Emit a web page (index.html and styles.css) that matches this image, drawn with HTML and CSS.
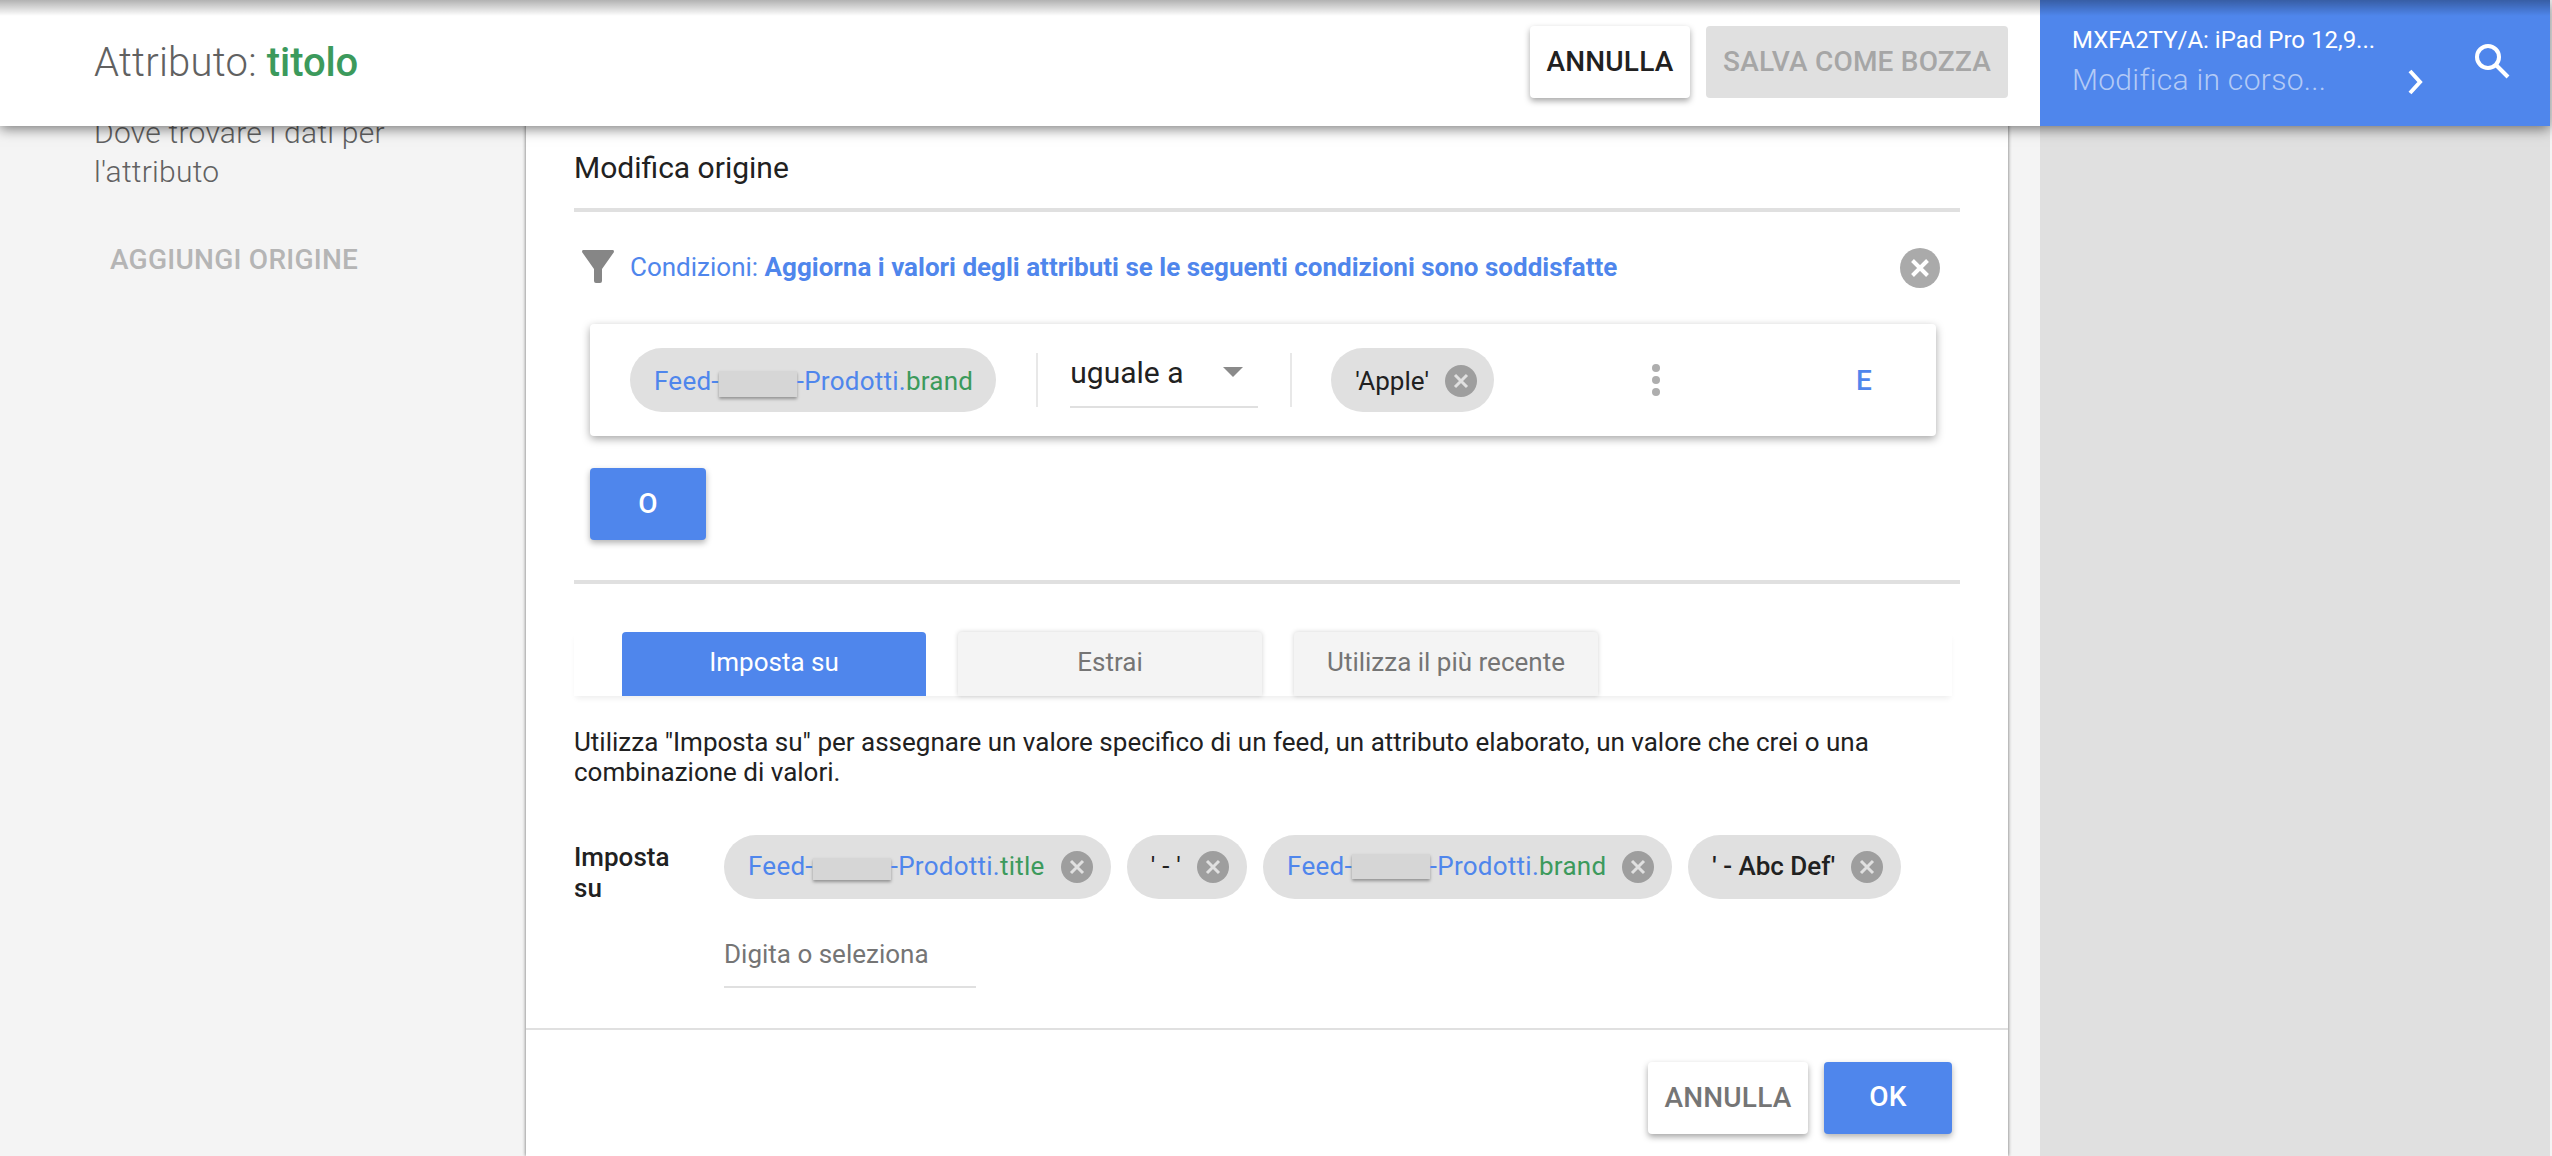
FILE: index.html
```html
<!DOCTYPE html>
<html lang="it">
<head>
<meta charset="utf-8">
<title>Attributo: titolo</title>
<link rel="stylesheet" href="styles.css">
</head>
<body>
<div class="page">
  <header class="topbar">
    <div class="topbar-main">
      <h1 class="title">Attributo: <span class="title-value">titolo</span></h1>
      <div class="topbar-actions">
        <button class="btn btn-white">ANNULLA</button>
        <button class="btn btn-disabled">SALVA COME BOZZA</button>
      </div>
    </div>
    <div class="topbar-side">
      <div class="side-text">
        <div class="side-name">MXFA2TY/A: iPad Pro 12,9...</div>
        <div class="side-status">Modifica in corso...</div>
      </div>
      <svg class="chevron" viewBox="0 0 20 30"><path d="M2 4 L12 15 L2 26" fill="none" stroke="#fff" stroke-width="4"/></svg>
      <svg class="search" viewBox="0 0 40 40"><circle cx="16" cy="16" r="11" fill="none" stroke="#fff" stroke-width="4"/><path d="M24 24 L36 36" fill="none" stroke="#fff" stroke-width="4"/></svg>
    </div>
  </header>

  <main class="columns">
    <aside class="left">
      <p class="left-text">Dove trovare i dati per l'attributo</p>
      <div class="left-action">AGGIUNGI ORIGINE</div>
    </aside>

    <section class="card">
      <div class="card-body">
        <h2 class="card-title">Modifica origine</h2>
        <div class="cond-head">
          <svg class="funnel" viewBox="0 0 32 33"><path d="M1 0 H31 Q32 0 32 2 L20 19 V31 Q20 33 18 33 H14 Q12 33 12 31 V19 L0 2 Q0 0 1 0 Z" fill="#868686"/></svg>
          <span class="cond-text">Condizioni: <b class="cond-strong">Aggiorna i valori degli attributi se le seguenti condizioni sono soddisfatte</b></span>
          <svg class="x-large" viewBox="0 0 40 40"><circle cx="20" cy="20" r="20" fill="#aaa"/><path d="M12.5 12.5 L27.5 27.5 M27.5 12.5 L12.5 27.5" stroke="#fff" stroke-width="4"/></svg>
        </div>

        <div class="cond-card">
          <span class="chip chip-low chip-first"><span class="blue">Feed-<i class="redact"></i>-Prodotti.</span><span class="green">brand</span></span>
          <span class="vline vline-a"></span>
          <span class="select"><span class="select-label">uguale a</span><span class="arrow"></span></span>
          <span class="vline vline-b"></span>
          <span class="chip chip-low chip-apple"><span class="dark">'Apple'</span><svg class="x" viewBox="0 0 32 32"><circle cx="16" cy="16" r="16" fill="#9e9e9e"/><path d="M10 10 L22 22 M22 10 L10 22" stroke="#e0e0e0" stroke-width="3"/></svg></span>
          <span class="dots"><i></i><i></i><i></i></span>
          <span class="and">E</span>
        </div>

        <button class="btn btn-blue btn-or">O</button>
        <div class="rule"></div>

        <div class="tabs">
          <div class="tab tab-active">Imposta su</div>
          <div class="tab">Estrai</div>
          <div class="tab">Utilizza il più recente</div>
        </div>

        <p class="help">Utilizza "Imposta su" per assegnare un valore specifico di un feed, un attributo elaborato, un valore che crei o una combinazione di valori.</p>

        <div class="set-row">
          <div class="set-label">Imposta su</div>
          <div class="set-values">
            <div class="chips">
              <span class="chip"><span class="blue">Feed-<i class="redact redact-title"></i>-Prodotti.</span><span class="green">title</span><svg class="x" viewBox="0 0 32 32"><circle cx="16" cy="16" r="16" fill="#9e9e9e"/><path d="M10 10 L22 22 M22 10 L10 22" stroke="#e0e0e0" stroke-width="3"/></svg></span>
              <span class="chip"><span class="dark">' - '</span><svg class="x" viewBox="0 0 32 32"><circle cx="16" cy="16" r="16" fill="#9e9e9e"/><path d="M10 10 L22 22 M22 10 L10 22" stroke="#e0e0e0" stroke-width="3"/></svg></span>
              <span class="chip"><span class="blue">Feed-<i class="redact redact-up"></i>-Prodotti.</span><span class="green">brand</span><svg class="x" viewBox="0 0 32 32"><circle cx="16" cy="16" r="16" fill="#9e9e9e"/><path d="M10 10 L22 22 M22 10 L10 22" stroke="#e0e0e0" stroke-width="3"/></svg></span>
              <span class="chip chip-strong"><span class="dark strong">' - Abc Def'</span><svg class="x" viewBox="0 0 32 32"><circle cx="16" cy="16" r="16" fill="#9e9e9e"/><path d="M10 10 L22 22 M22 10 L10 22" stroke="#e0e0e0" stroke-width="3"/></svg></span>
            </div>
            <div class="type-input">Digita o seleziona</div>
          </div>
        </div>
      </div>

      <footer class="card-footer">
        <button class="btn btn-white btn-gray">ANNULLA</button>
        <button class="btn btn-blue btn-ok">OK</button>
      </footer>
    </section>

    <div class="gutter"></div>
    <aside class="right"></aside>
  </main>
</div>
</body>
</html>
```
FILE: styles.css
```css
* { box-sizing: border-box; }
html, body { margin: 0; padding: 0; }
body { font-family: Roboto, "Liberation Sans", sans-serif; color: #212121; background: #f4f4f4; }

.page { position: relative; width: 2552px; height: 1156px; overflow: hidden; background: #f4f4f4; }

/* Header */
.topbar {
  position: absolute; top: 0; left: 0; z-index: 5;
  width: 2550px; height: 126px; display: flex;
  box-shadow: 0 3px 12px rgba(0,0,0,.5);
}
.topbar::before {
  content: ""; position: absolute; top: 0; left: 0; right: 0; height: 16px; z-index: 6;
  background: linear-gradient(to bottom, rgba(0,0,0,.3), rgba(0,0,0,0));
}
.topbar-main {
  width: 2040px; background: #fff; display: flex; align-items: center;
  justify-content: space-between; padding: 0 32px 2px 94px;
}
.title { margin: 0; font-size: 40px; font-weight: 300; letter-spacing: .25px; color: #616161; }
.title-value { color: #3c9a5c; font-weight: 500; letter-spacing: -.1px; }
.topbar-actions { display: flex; gap: 16px; }
.topbar-side {
  width: 510px; background: #4f86ec; display: flex; align-items: flex-start; padding-left: 32px;
}
.side-text { width: 336px; padding-top: 26px; }
.side-name { font-size: 24px; line-height: 28px; color: #fff; }
.side-status { font-size: 30px; line-height: 36px; font-weight: 300; letter-spacing: .3px; margin-top: 8px; color: #b3caf6; white-space: nowrap; }
.chevron { width: 20px; height: 30px; margin-top: 67px; flex: none; }
.search { width: 40px; height: 40px; margin: 41px 0 0 44px; flex: none; }

/* Buttons */
.btn {
  height: 72px; border: 0; border-radius: 4px; font-family: inherit; font-size: 28px;
  font-weight: 500; letter-spacing: .2px; padding: 0 0 2px; display: block;
}
.btn-white { width: 160px; background: #fff; color: #212121; box-shadow: 0 3px 6px rgba(0,0,0,.35); }
.btn-gray { color: #757575; }
.btn-disabled { width: 302px; background: #e0e0e0; color: #a6a6a6; }
.btn-blue { background: #4f86ec; color: #fff; box-shadow: 0 3px 6px rgba(0,0,0,.3); }

/* Columns */
.columns { display: grid; grid-template-columns: 526px 1482px 32px 510px; height: 1156px; }

.left { padding: 113px 0 0 94px; }
.left-text { margin: 0; width: 340px; font-size: 30px; font-weight: 300; letter-spacing: .25px; line-height: 39px; color: #616161; }
.left-action { margin: 51px 0 0 16px; font-size: 28px; font-weight: 500; letter-spacing: .25px; line-height: 36px; color: #b5b5b5; }

.card { background: #fff; box-shadow: -1px 0 3px rgba(0,0,0,.3), 1px 0 3px rgba(0,0,0,.3); display: flex; flex-direction: column; position: relative; }
.card-body { height: 1028px; padding: 0 48px; }
.card-title {
  margin: 0; height: 212px; padding-top: 148px; font-size: 30px; line-height: 40px; font-weight: 400;
  color: #212121; border-bottom: 4px solid #e0e0e0;
}
.cond-head { height: 112px; display: flex; align-items: center; padding: 0 0 4px 8px; position: relative; }
.funnel { width: 32px; height: 33px; flex: none; }
.cond-text { margin: 2px 0 0 16px; font-size: 26px; color: #4f86ec; }
.cond-strong { font-weight: 700; }
.x-large { width: 40px; height: 40px; margin: 4px 20px 0 auto; flex: none; }

.cond-card {
  margin-left: 16px; width: 1346px; height: 112px; background: #fff; border-radius: 4px;
  box-shadow: 0 3px 8px rgba(0,0,0,.35); display: flex; align-items: center; padding-left: 40px;
}

.chip {
  height: 64px; border-radius: 32px; background: #e0e0e0; display: inline-flex; align-items: center;
  padding: 0 18px 0 24px; font-size: 26px; letter-spacing: .25px; white-space: nowrap; flex: none;
}
.chip-low { padding-top: 2px; }
.chip-first { padding-right: 23px; }
.chip-apple { padding-right: 17px; margin-left: 39px; letter-spacing: 0; }
.chip-strong { letter-spacing: 0; }
.chips .chip { padding-bottom: 2px; }
.chips .x { margin-top: 2px; }
.blue { color: #4f86ec; }
.green { color: #3c9a5c; }
.dark { color: #212121; }
.strong { font-weight: 500; }
.redact {
  display: inline-block; width: 78px; height: 26px; background: #d6d6d6; vertical-align: -7px;
  box-shadow: 0 2px 3px rgba(0,0,0,.35);
}
.redact-title { height: 22px; vertical-align: -5px; }
.redact-up { height: 25px; vertical-align: -4px; }
.x { width: 32px; height: 32px; margin-left: 16px; flex: none; }
.vline { width: 2px; height: 54px; background: #e8e8e8; flex: none; }
.vline-a { margin-left: 40px; }
.select {
  margin: -2px 0 0 32px; width: 188px; height: 58px; border-bottom: 2px solid #e0e0e0;
  display: flex; justify-content: space-between; flex: none;
}
.select-label { font-size: 30px; line-height: 46px; color: #212121; }
.arrow {
  width: 0; height: 0; margin: 17px 15px 0 0; border-left: 10px solid transparent;
  border-right: 10px solid transparent; border-top: 10px solid #8a8a8a;
}
.vline-b { margin-left: 32px; }
.dots { margin-left: 158px; display: flex; flex-direction: column; gap: 4px; flex: none; }
.dots i { display: block; width: 8px; height: 8px; border-radius: 50%; background: #aeaeae; }
.and { margin-left: 196px; font-size: 28px; font-weight: 500; color: #4f86ec; }

.btn-or { width: 116px; margin: 32px 0 0 16px; }
.rule { height: 4px; margin-top: 40px; background: #e0e0e0; }

.tabs {
  height: 64px; margin: 48px 8px 0 0; padding-left: 48px; display: flex; gap: 32px;
  box-shadow: 0 4px 6px -2px rgba(0,0,0,.08);
}
.tab {
  width: 304px; height: 64px; background: #f4f4f4; color: #757575; font-size: 26px; line-height: 60px;
  text-align: center; border-radius: 4px 4px 0 0; box-shadow: 0 0 5px rgba(0,0,0,.18);
}
.tab-active { background: #4f86ec; color: #fff; box-shadow: none; }

.help { margin: 31px 0 0; font-size: 26px; line-height: 30px; color: #212121; }

.set-row { display: flex; margin-top: 48px; }
.set-label { width: 150px; padding: 7px 60px 0 0; font-size: 26px; font-weight: 500; line-height: 31px; color: #212121; flex: none; }
.chips { display: flex; gap: 16px; }
.type-input {
  width: 252px; height: 89px; border-bottom: 2px solid #e0e0e0; padding-top: 37px;
  font-size: 26px; line-height: 36px; color: #757575;
}

.card-footer {
  height: 128px; border-top: 2px solid #e0e0e0; display: flex; justify-content: flex-end;
  gap: 16px; padding: 32px 56px 0 0;
}
.btn-ok { width: 128px; padding-bottom: 4px; }

.right { background: #e0e0e0; }
```
